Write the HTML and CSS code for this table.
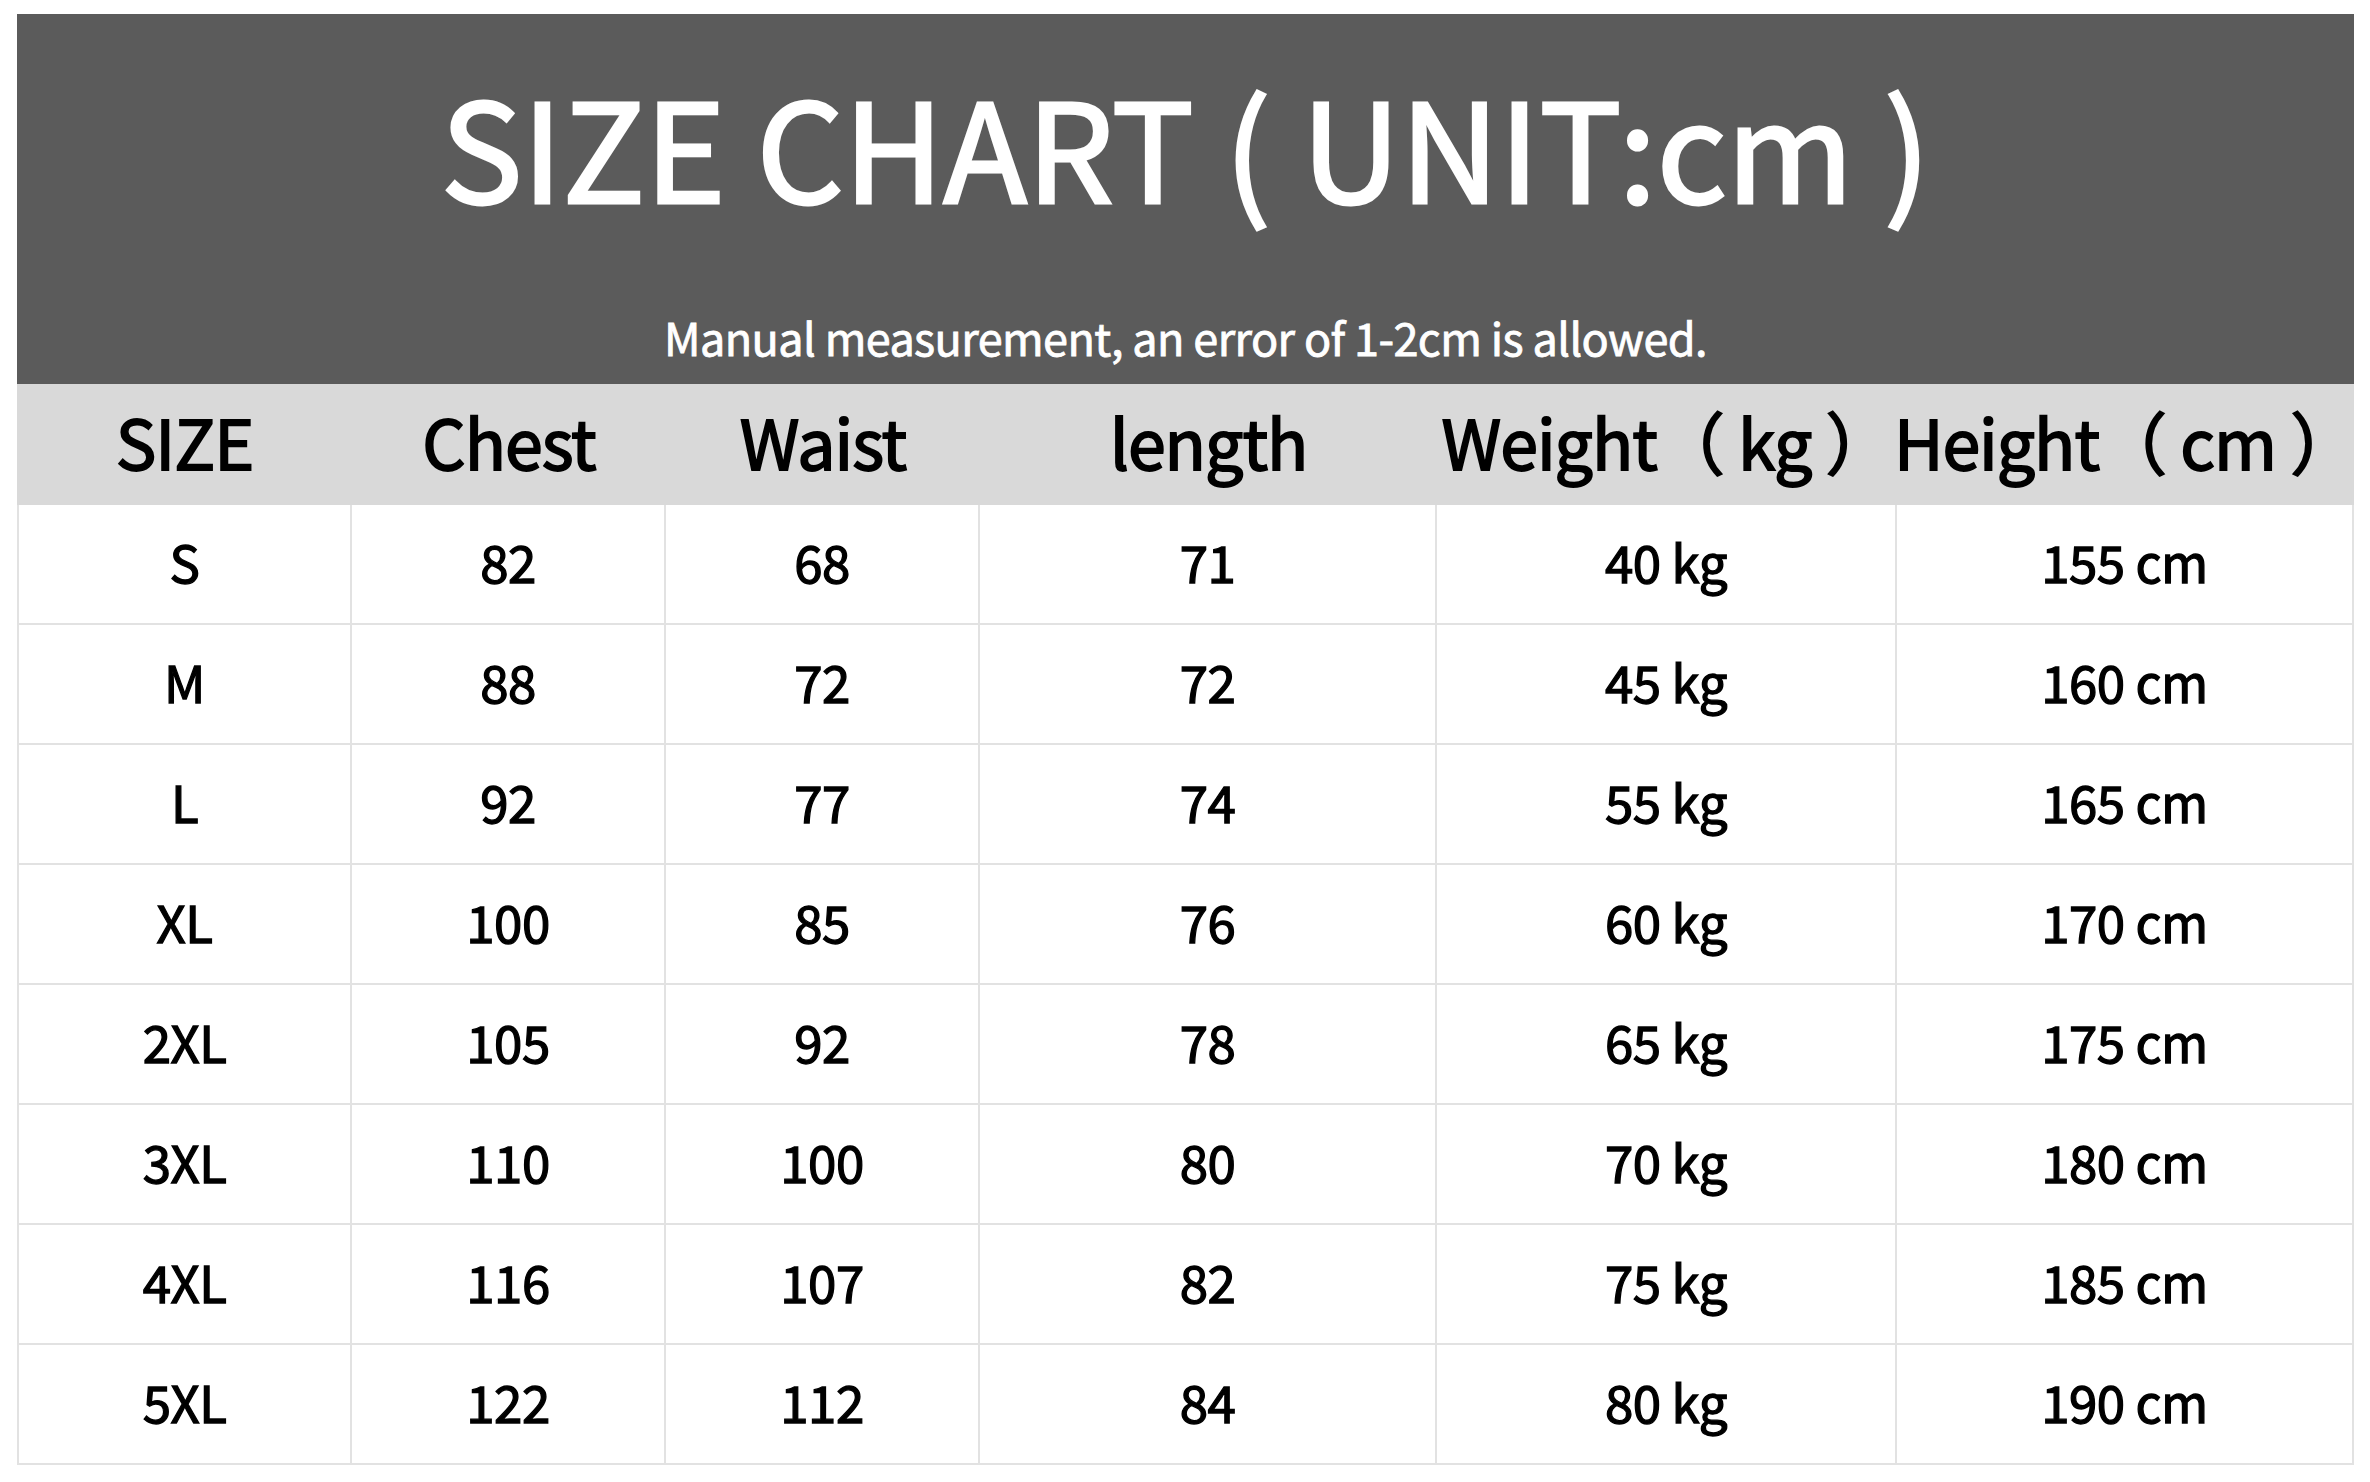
FILE: index.html
```html
<!DOCTYPE html>
<html lang="en">
<head>
<meta charset="utf-8">
<title>Size Chart</title>
<link rel="stylesheet" href="styles.css">
</head>
<body>
<div class="chart">
  <header class="banner">
    <h1 class="title">SIZE CHART ( UNIT:cm )</h1>
    <p class="subtitle">Manual measurement, an error of 1-2cm is allowed.</p>
  </header>
  <div class="head-row">
    <div class="hcell">SIZE</div>
    <div class="hcell">Chest</div>
    <div class="hcell">Waist</div>
    <div class="hcell">length</div>
    <div class="hcell">Weight（ kg ）</div>
    <div class="hcell">Height（ cm ）</div>
  </div>
  <div class="body">
    <div class="row"><div class="cell">S</div><div class="cell">82</div><div class="cell">68</div><div class="cell">71</div><div class="cell">40 kg</div><div class="cell">155 cm</div></div>
    <div class="row"><div class="cell">M</div><div class="cell">88</div><div class="cell">72</div><div class="cell">72</div><div class="cell">45 kg</div><div class="cell">160 cm</div></div>
    <div class="row"><div class="cell">L</div><div class="cell">92</div><div class="cell">77</div><div class="cell">74</div><div class="cell">55 kg</div><div class="cell">165 cm</div></div>
    <div class="row"><div class="cell">XL</div><div class="cell">100</div><div class="cell">85</div><div class="cell">76</div><div class="cell">60 kg</div><div class="cell">170 cm</div></div>
    <div class="row"><div class="cell">2XL</div><div class="cell">105</div><div class="cell">92</div><div class="cell">78</div><div class="cell">65 kg</div><div class="cell">175 cm</div></div>
    <div class="row"><div class="cell">3XL</div><div class="cell">110</div><div class="cell">100</div><div class="cell">80</div><div class="cell">70 kg</div><div class="cell">180 cm</div></div>
    <div class="row"><div class="cell">4XL</div><div class="cell">116</div><div class="cell">107</div><div class="cell">82</div><div class="cell">75 kg</div><div class="cell">185 cm</div></div>
    <div class="row"><div class="cell">5XL</div><div class="cell">122</div><div class="cell">112</div><div class="cell">84</div><div class="cell">80 kg</div><div class="cell">190 cm</div></div>
  </div>
</div>
</body>
</html>
```

FILE: styles.css
```css
html, body {
  margin: 0;
  padding: 0;
  background: #ffffff;
}

body {
  font-family: "Noto Sans CJK SC", "Noto Sans", sans-serif;
  color: #000000;
}

.chart {
  width: 2337px;
  margin: 14px 0 0 17px;
}

.banner {
  box-sizing: border-box;
  height: 370px;
  background: #5b5b5b;
  color: #ffffff;
  display: flex;
  flex-direction: column;
  align-items: center;
  padding-top: 61px;
}

.title {
  margin: 0;
  font-size: 137px;
  font-weight: 400;
  line-height: 137px;
  white-space: pre;
  -webkit-text-stroke: 3px #ffffff;
}

.subtitle {
  margin: 102px 0 0 0;
  font-size: 45px;
  line-height: 46px;
  font-weight: 400;
  letter-spacing: -0.6px;
  -webkit-text-stroke: 0.8px #ffffff;
}

.head-row,
.row {
  display: grid;
  grid-template-columns: 335px 314px 314px 457px 460px 457px;
}

.head-row {
  height: 121px;
  background: #d9d9d9;
}

.hcell {
  box-sizing: border-box;
  display: flex;
  align-items: center;
  justify-content: center;
  padding-bottom: 8px;
  font-size: 68px;
  font-weight: 400;
  letter-spacing: -1px;
  white-space: pre;
  -webkit-text-stroke: 1.8px #000000;
}

.row {
  height: 120px;
}

.cell {
  box-sizing: border-box;
  display: flex;
  align-items: center;
  justify-content: center;
  padding-bottom: 6px;
  font-size: 51px;
  font-weight: 400;
  letter-spacing: -0.5px;
  -webkit-text-stroke: 1.3px #000000;
  border-right: 2px solid #e2e2e2;
  border-bottom: 2px solid #e2e2e2;
}

.cell:first-child {
  border-left: 2px solid #e2e2e2;
}
```
